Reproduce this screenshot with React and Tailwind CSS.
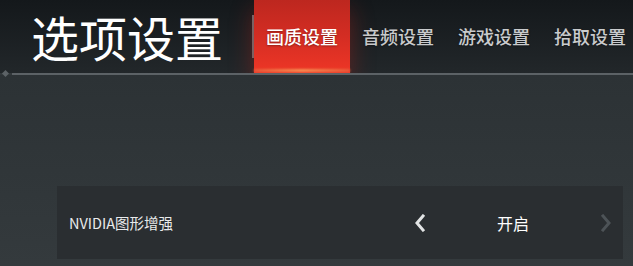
import React from "react";

const tabs = ["画质设置", "音频设置", "游戏设置", "拾取设置"];

const Chevron = ({ dir, className }) => (
  <svg width="14" height="18" viewBox="0 0 14 18" className={className}>
    <path
      d={dir === "left" ? "M10 2 L4 9 L10 16" : "M4 2 L10 9 L4 16"}
      fill="none"
      stroke="currentColor"
      strokeWidth="3"
      strokeLinecap="square"
    />
  </svg>
);

const App = () => {
  return (
    <div
      className="w-[633px] h-[266px] overflow-hidden flex flex-col bg-[#32383b]"
      style={{ fontFamily: '"Noto Sans CJK SC", "Noto Sans", sans-serif' }}
    >
      {/* Header */}
      <div className="relative z-10 h-[73px] flex items-stretch bg-gradient-to-b from-[#14181b] to-[#22272a] overflow-hidden">
        <div className="w-[252px] shrink-0 pl-[31px] flex items-center">
          <h1 className="text-[48px] leading-none text-white pb-[2px]">选项设置</h1>
        </div>
        <div className="flex items-center shrink-0">
          <div className="w-[2px] h-[43px] bg-[#6b6f73]" />
        </div>
        <div className="flex shrink-0">
          {tabs.map((t, i) => (
            <div
              key={t}
              className={
                i === 0
                  ? "relative w-[96px] flex items-center justify-center text-[18px] text-white bg-gradient-to-b from-[#bd271f] via-[#d42d23] to-[#ee3626] shadow-[0_10px_22px_rgba(200,35,25,0.4)]"
                  : "w-[96px] flex items-center justify-center text-[18px] text-[#c9cbcd]"
              }
            >
              <span className="pb-[1px] font-medium [text-shadow:0_1px_2px_rgba(0,0,0,0.35)]">{t}</span>
              {i === 0 && (
                <div className="absolute left-0 right-0 bottom-[1px] h-[3px] bg-gradient-to-r from-[#e8583a] via-[#f59355] to-[#e8583a] blur-[1px]" />
              )}
            </div>
          ))}
        </div>
      </div>

      {/* Divider line */}
      <div className="relative z-20 h-[2px] bg-[#5c6266] ml-[12px]">
        <div className="absolute left-[-9px] top-[-2px] w-[5px] h-[5px] rotate-45 bg-[#5c6266]" />
      </div>

      {/* Body */}
      <div className="flex-1 bg-gradient-to-b from-[#2c3235] to-[#343a3d] pt-[111px] pl-[57px] pr-[10px]">
        <div className="h-[73px] bg-[#2a2e31] flex items-center">
          <div className="pl-[12px] w-[346px] text-[14.5px] text-[#e8eaeb]">NVIDIA图形增强</div>
          <Chevron dir="left" className="text-[#e2e4e5] ml-[10px]" />
          <div className="w-[172px] text-center text-[16px] text-white">开启</div>
          <Chevron dir="right" className="text-[#4d5357]" />
        </div>
      </div>
    </div>
  );
};

export default App;
